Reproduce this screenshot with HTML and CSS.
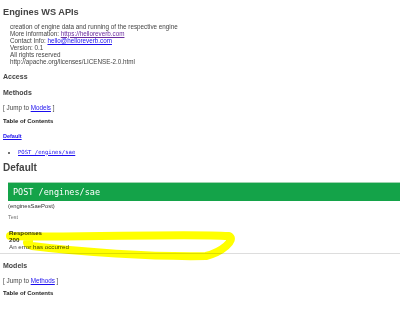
FILE: index.html
```html
<!DOCTYPE html>
<html lang="en">
<head>
    <meta charset="UTF-8">
    <title>Engines WS APIs</title>
    <link rel="stylesheet" href="styles.css">
</head>
<body>
    <div class="page">
        <h1 class="title">Engines WS APIs</h1>
        <div class="app-desc">
            <div>creation of engine data and running of the respective engine</div>
            <div>More information: <a href="https://helloreverb.com" class="visited">https://helloreverb.com</a></div>
            <div>Contact Info: <a href="mailto:hello@helloreverb.com">hello@helloreverb.com</a></div>
            <div>Version: 0.1</div>
            <div>All rights reserved</div>
            <div>http://apache.org/licenses/LICENSE-2.0.html</div>
        </div>

        <h2 class="sec sec-access">Access</h2>
        <h2 class="sec sec-methods">Methods</h2>
        <div class="jump">[ Jump to <a href="#models">Models</a> ]</div>
        <h4 class="toc">Table of Contents</h4>
        <div class="toc-group"><a href="#Default">Default</a></div>
        <ul class="toc-list">
            <li><a href="#enginesSaePost"><code>POST /engines/sae</code></a></li>
        </ul>

        <h1 class="group-title">Default</h1>
        <div class="method">
            <div class="method-path">POST /engines/sae</div>
            <div class="nickname">(enginesSaePost)</div>
            <div class="method-summary">Test</div>
            <div class="responses">
                <div class="resp-head">Responses</div>
                <div class="resp-code">200</div>
                <div>An error has occurred</div>
            </div>
        </div>
        <hr class="rule">

        <h2 class="sec sec-models" id="models">Models</h2>
        <div class="jump">[ Jump to <a href="#methods">Methods</a> ]</div>
        <h4 class="toc toc-models">Table of Contents</h4>
    </div>

    <!-- marker scribble drawn over the page -->
    <svg class="scribble" width="400" height="320" viewBox="0 0 400 320">
        <path d="M10 236 C 80 238, 180 233, 229 236 C 236 240, 222 252, 206 256 C 150 257, 80 252, 32 246 C 26 244, 26 242, 29 241"
              fill="none" stroke="#ffff00" stroke-width="8" stroke-linecap="round" stroke-linejoin="round"/>
    </svg>
</body>
</html>
```

FILE: styles.css
```css
* {
    margin: 0;
    padding: 0;
    box-sizing: border-box;
}

body {
    font-family: 'Liberation Sans', Arial, sans-serif;
    color: #444;
    background: white;
    width: 400px;
    height: 320px;
    overflow: hidden;
    position: relative;
}

a {
    color: #1a0dee;
}

a.visited {
    color: #6a2c9e;
}

.page {
    padding-left: 3px;
}

.title {
    font-size: 9.2px;
    line-height: 12px;
    font-weight: bold;
    margin-top: 6px;
}

.app-desc {
    padding-left: 7px;
    margin-top: 4.5px;
    font-size: 6.3px;
    line-height: 7px;
}

.sec {
    font-size: 7px;
    line-height: 9px;
    font-weight: bold;
    margin-top: 7px;
}

.jump {
    font-size: 6.3px;
    line-height: 7px;
    margin-top: 7px;
}

.toc {
    font-size: 6px;
    line-height: 7px;
    font-weight: bold;
    color: #222;
    margin-top: 7px;
}

.toc-models {
    margin-top: 6px;
}

.toc-group {
    font-size: 5.5px;
    line-height: 7px;
    font-weight: bold;
    margin-top: 8px;
}

.toc-list {
    list-style: disc;
    padding-left: 15px;
    margin-top: 9px;
    font-size: 5.5px;
    line-height: 7px;
}

.toc-list code {
    font-family: 'DejaVu Sans Mono', monospace;
    font-size: 5.6px;
}

.group-title {
    font-size: 10px;
    line-height: 12px;
    font-weight: 600;
    margin-top: 6.5px;
}

.method {
    margin-left: 5px;
    margin-top: 8px;
}

.method-path {
    background: #14a349;
    border-top: 1px solid #9fd4b0;
    color: white;
    font-family: 'DejaVu Sans Mono', monospace;
    font-size: 8.5px;
    line-height: 18px;
    height: 19px;
    padding-left: 5px;
}

.nickname {
    font-size: 5.9px;
    line-height: 7px;
    margin-top: 1.5px;
    color: #333;
}

.method-summary {
    font-size: 5.5px;
    line-height: 7px;
    margin-top: 4px;
    color: #777;
}

.responses {
    font-size: 6.2px;
    line-height: 7px;
    margin-top: 8px;
    padding-left: 1px;
}

.resp-head,
.resp-code {
    font-weight: bold;
    color: #333;
}

.rule {
    border: none;
    border-top: 1px solid #ddd;
    margin-top: 3px;
    margin-left: -3px;
}

.sec-models {
    margin-top: 7.5px;
}

.scribble {
    position: absolute;
    top: 0;
    left: 0;
    pointer-events: none;
    mix-blend-mode: multiply;
}
```
